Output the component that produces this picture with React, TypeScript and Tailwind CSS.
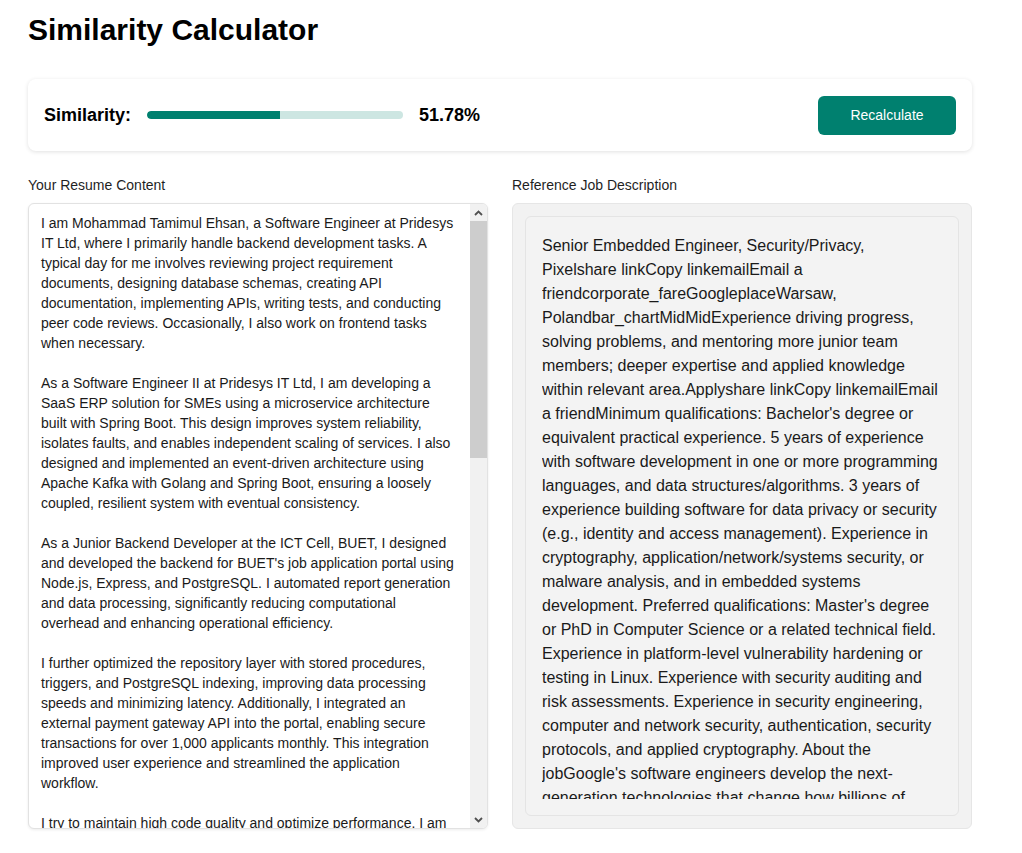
import React from "react";

const resumeText = `I am Mohammad Tamimul Ehsan, a Software Engineer at Pridesys IT Ltd, where I primarily handle backend development tasks. A typical day for me involves reviewing project requirement documents, designing database schemas, creating API documentation, implementing APIs, writing tests, and conducting peer code reviews. Occasionally, I also work on frontend tasks when necessary.

As a Software Engineer II at Pridesys IT Ltd, I am developing a SaaS ERP solution for SMEs using a microservice architecture built with Spring Boot. This design improves system reliability, isolates faults, and enables independent scaling of services. I also designed and implemented an event-driven architecture using Apache Kafka with Golang and Spring Boot, ensuring a loosely coupled, resilient system with eventual consistency.

As a Junior Backend Developer at the ICT Cell, BUET, I designed and developed the backend for BUET's job application portal using Node.js, Express, and PostgreSQL. I automated report generation and data processing, significantly reducing computational overhead and enhancing operational efficiency.

I further optimized the repository layer with stored procedures, triggers, and PostgreSQL indexing, improving data processing speeds and minimizing latency. Additionally, I integrated an external payment gateway API into the portal, enabling secure transactions for over 1,000 applicants monthly. This integration improved user experience and streamlined the application workflow.

I try to maintain high code quality and optimize performance. I am comfortable working with Docker, Kubernetes, and CI/CD pipelines, and I regularly use tools such as Git, Jira, and Postman in my daily workflow. I write unit and integration tests with JUnit, Mockito, and Jest, and I care about keeping test coverage meaningful rather than merely high.

During my undergraduate studies in Computer Science and Engineering at Bangladesh University of Engineering and Technology (BUET), I developed a strong foundation in algorithms, data structures, operating systems, computer networks, and database management systems.

Technical Skills: Java, Go, JavaScript, TypeScript, Python, C++, Spring Boot, Node.js, Express, React, PostgreSQL, MySQL, MongoDB, Redis, Apache Kafka, RabbitMQ, Docker, Kubernetes, AWS, Linux, Git, REST, gRPC, GraphQL.`;

const jobText = `Senior Embedded Engineer, Security/Privacy, Pixelshare linkCopy linkemailEmail a friendcorporate_fareGoogleplaceWarsaw, Polandbar_chartMidMidExperience driving progress, solving problems, and mentoring more junior team members; deeper expertise and applied knowledge within relevant area.Applyshare linkCopy linkemailEmail a friendMinimum qualifications: Bachelor's degree or equivalent practical experience. 5 years of experience with software development in one or more programming languages, and data structures/algorithms. 3 years of experience building software for data privacy or security (e.g., identity and access management). Experience in cryptography, application/network/systems security, or malware analysis, and in embedded systems development. Preferred qualifications: Master's degree or PhD in Computer Science or a related technical field. Experience in platform-level vulnerability hardening or testing in Linux. Experience with security auditing and risk assessments. Experience in security engineering, computer and network security, authentication, security protocols, and applied cryptography. About the jobGoogle's software engineers develop the next-generation technologies that change how billions of users connect, explore, and interact with information and one another.`;

function Chevron({ up }: { up?: boolean }) {
  return (
    <svg width="9" height="6" viewBox="0 0 9 6" className={up ? "" : "rotate-180"}>
      <path d="M1 5 L4.5 1.5 L8 5" fill="none" stroke="#505050" strokeWidth="1.8" />
    </svg>
  );
}

export default function App() {
  const similarity = 51.78;

  return (
    <div className="min-h-screen bg-white font-['Liberation_Sans',Arial,sans-serif] text-black">
      <div className="w-[944px] ml-7 pt-3">
        {/* Header */}
        <h1 className="text-3xl font-bold leading-9 mb-[31px]">Similarity Calculator</h1>

        {/* Score card */}
        <div className="flex h-[72px] items-center justify-between rounded-lg bg-white px-4 shadow-[0_1px_4px_rgba(0,0,0,0.12)]">
          <div className="flex items-center gap-4">
            <span className="text-lg font-bold">Similarity:</span>
            <div className="h-2 w-64 rounded-full bg-[#cde6e2] overflow-hidden">
              <div
                className="h-full bg-[#00806f] rounded-l-full"
                style={{ width: `${similarity}%` }}
              />
            </div>
            <span className="text-lg font-bold">{similarity.toFixed(2)}%</span>
          </div>
          <button className="h-[39px] w-[138px] rounded-md bg-[#00806f] text-sm text-white">
            Recalculate
          </button>
        </div>

        {/* Texts */}
        <div className="mt-6 grid grid-cols-2 gap-6">
          <div>
            <label className="block text-sm leading-5 mb-2 text-[#1f1f1f]">Your Resume Content</label>
            <div className="flex h-[626px] overflow-hidden rounded-md border border-[#e2e2e2] bg-white shadow-[0_1px_3px_rgba(0,0,0,0.08)]">
              <textarea
                className="block h-full flex-1 resize-none overflow-hidden bg-transparent px-3 pt-[9px] pb-2 text-sm leading-5 text-[#1a1a1a] outline-none"
                defaultValue={resumeText}
              />
              {/* scrollbar */}
              <div className="flex w-[17px] flex-col bg-[#f1f1f1]">
                <div className="flex h-[17px] items-center justify-center">
                  <Chevron up />
                </div>
                <div className="flex-1">
                  <div className="h-[237px] bg-[#cdcdcd]" />
                </div>
                <div className="flex h-[17px] items-center justify-center">
                  <Chevron />
                </div>
              </div>
            </div>
          </div>
          <div>
            <label className="block text-sm leading-5 mb-2 text-[#1f1f1f]">Reference Job Description</label>
            <div className="h-[626px] rounded-md border border-[#e6e6e6] bg-[#f2f2f2] p-3">
              <div className="flex h-full flex-col rounded-md border border-[#e4e4e4] bg-[#f3f3f3] px-4 pt-[17px] pb-4">
                <div className="flex-1 overflow-hidden text-base leading-6 text-[#1a1a1a]">
                  {jobText}
                </div>
              </div>
            </div>
          </div>
        </div>
      </div>
    </div>
  );
}
